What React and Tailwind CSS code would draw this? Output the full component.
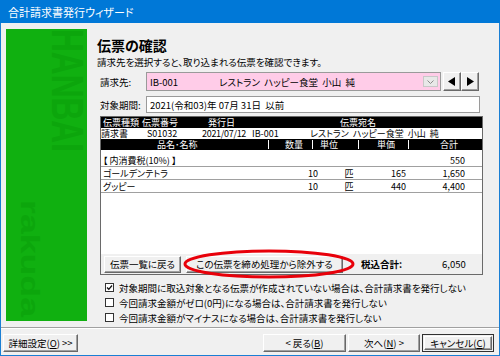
const FONT = "font-[family-name:'Noto_Sans_CJK_JP','Noto_Sans',sans-serif] [font-feature-settings:'palt']"

const Btn3D = ({ className = "", children }) => (
  <div
    className={`flex items-center justify-center whitespace-nowrap bg-[#f0f0f0] border border-t-white border-l-white border-r-[#696969] border-b-[#696969] shadow-[inset_-1px_-1px_0_#a0a0a0] ${className}`}
  >
    {children}
  </div>
)

const Checkbox = ({ checked, label }) => (
  <div className="flex items-center h-[15px] pl-[8px] gap-[5px] whitespace-nowrap">
    <div className="w-[9px] h-[9px] border border-[#333] bg-white flex items-center justify-center">
      {checked && (
        <svg width="7" height="7" viewBox="0 0 7 7">
          <polyline points="1,3.5 2.8,5.3 6,1.5" fill="none" stroke="#111" strokeWidth="1.3" />
        </svg>
      )}
    </div>
    <span>{label}</span>
  </div>
)

const Sep = () => <div className="w-px h-[9px] bg-white self-center" />

// faint product logo on the green side panel
const SideLogo = () => (
  <svg width="81" height="292" viewBox="0 0 81 292" className="block">
    <rect width="81" height="292" fill="#10b010" />
    <g fill="#0ca60c" fontFamily="Liberation Sans, sans-serif" fontWeight="700">
      <text transform="translate(46 0) rotate(90)" fontSize="44" textLength="123" lengthAdjust="spacingAndGlyphs">
        HANBAI
      </text>
      <text transform="translate(15 171) rotate(90)" fontSize="26" textLength="117" lengthAdjust="spacingAndGlyphs">
        rakuda
      </text>
    </g>
  </svg>
)

export default function App() {
  const rows = [
    { name: "ゴールデンテトラ", qty: "10", unit: "匹", price: "165", total: "1,650" },
    { name: "グッピー", qty: "10", unit: "匹", price: "440", total: "4,400" }
  ]

  return (
    <div className={`w-[500px] h-[356px] flex flex-col text-[9.5px] leading-[12px] text-black ${FONT}`}>
      {/* Title bar */}
      <div className="h-[23px] bg-[#0078d7] text-white text-[11px] pl-[8px] flex items-center">合計請求書発行ウィザード</div>

      <div className="flex-1 flex flex-col bg-[#f0f0f0] border-x border-b border-[#1a7fd4]">
        {/* Main area */}
        <div className="h-[304px] flex pt-[6px] pl-[5px]">
          <SideLogo />

          {/* Content */}
          <div className="ml-[10px] w-[387px] flex flex-col">
            <div className="mt-[7px] text-[14px] leading-[18px] font-bold">伝票の確認</div>
            <div className="mt-[2px] leading-[12px] whitespace-nowrap">請求先を選択すると、取り込まれる伝票を確認できます。</div>

            {/* 請求先 */}
            <div className="mt-[4px] flex items-center h-[19px] whitespace-nowrap">
              <div className="w-[49px] pl-[3px]">請求先:</div>
              <div className="w-[295px] h-[19px] bg-[#ffcce8] border border-[#9a9a9a] flex items-center pl-[3px] pr-[2px]">
                <span className="w-[69px]">IB-001</span>
                <span className="flex-1">レストラン&nbsp;&nbsp;ハッピー食堂&nbsp;&nbsp;小山&nbsp;&nbsp;純</span>
                <div className="w-[15px] h-[11px] bg-[#e8e8e8] border border-[#c8c8c8] flex items-center justify-center">
                  <svg width="7" height="4" viewBox="0 0 7 4">
                    <polyline points="0.5,0.5 3.5,3.5 6.5,0.5" fill="none" stroke="#8a8a8a" strokeWidth="1" />
                  </svg>
                </div>
              </div>
              <Btn3D className="ml-[2px] w-[18px] h-[19px]">
                <svg width="8" height="9" viewBox="0 0 8 9">
                  <polygon points="7,0 7,9 0,4.5" fill="#000" />
                </svg>
              </Btn3D>
              <Btn3D className="w-[18px] h-[19px]">
                <svg width="8" height="9" viewBox="0 0 8 9">
                  <polygon points="1,0 1,9 8,4.5" fill="#000" />
                </svg>
              </Btn3D>
            </div>

            {/* 対象期間 */}
            <div className="mt-[5px] flex items-center h-[17px] whitespace-nowrap">
              <div className="w-[49px] pl-[3px]">対象期間:</div>
              <div className="w-[334px] h-[17px] bg-white border border-[#9a9a9a] flex items-center pl-[3px]">
                2021(令和03)年 07月 31日&nbsp;&nbsp;以前
              </div>
            </div>

            {/* Table */}
            <div className="mt-[3px] ml-[3px] w-[383px] h-[159px] border border-[#6a6a6a] bg-white flex flex-col whitespace-nowrap text-[9px] leading-[11px]">
              <div className="h-[11px] bg-black text-white flex items-center">
                <div className="w-[40px] pl-[2px]">伝票種類</div>
                <div className="w-[58px] pl-[1px]">伝票番号</div>
                <div className="w-[50px] pl-[9px]">発行日</div>
                <div className="w-[34px]" />
                <div className="flex-1 pl-[57px]">伝票宛名</div>
              </div>
              <div className="h-[11px] flex items-center">
                <div className="w-[40px]">請求書</div>
                <div className="w-[58px] pl-[6px]">S01032</div>
                <div className="w-[50px] pl-[3px] tracking-[-0.3px]">2021/07/12</div>
                <div className="w-[34px] pl-[3px]">IB-001</div>
                <div className="flex-1 pl-[27px]">レストラン&nbsp;&nbsp;ハッピー食堂&nbsp;&nbsp;小山&nbsp;&nbsp;純</div>
              </div>
              <div className="h-[11px] bg-black text-white flex">
                <div className="w-[167px] pl-[56px]">品名･名称</div>
                <Sep />
                <div className="w-[43px] pl-[16px]">数量</div>
                <Sep />
                <div className="w-[45px] pl-[7px]">単位</div>
                <Sep />
                <div className="w-[49px] pl-[18px]">単価</div>
                <Sep />
                <div className="flex-1 pl-[31px]">合計</div>
              </div>

              <div className="h-[17px] pt-[4px] flex items-center border-b border-[#a0a0a0]">
                <div className="w-[304px] pl-[2px]">【 内消費税(10%) 】</div>
                <div className="w-[60px] text-right">550</div>
              </div>
              {rows.map((r) => (
                <div key={r.name} className="h-[13px] flex items-center border-b border-[#a0a0a0]">
                  <div className="w-[167px] pl-[2px]">{r.name}</div>
                  <div className="w-[50px] text-right">{r.qty}</div>
                  <div className="w-[62px] text-center">{r.unit}</div>
                  <div className="w-[26px] text-right">{r.price}</div>
                  <div className="w-[59px] text-right">{r.total}</div>
                </div>
              ))}

              <div className="flex-1" />

              {/* Bottom bar */}
              <div className="relative h-[20px] bg-[#f0f0f0] flex items-center pl-[3px] text-[9.5px]">
                <Btn3D className="w-[77px] h-[17px]">伝票一覧に戻る</Btn3D>
                <Btn3D className="ml-[5px] w-[157px] h-[17px]">この伝票を締め処理から除外する</Btn3D>
                <div className="ml-[18px] font-bold">税込合計:</div>
                <div className="ml-[40px] w-[22px] text-right">6,050</div>
                <svg className="absolute left-[82px] top-[-5px]" width="172" height="30" viewBox="0 0 172 30">
                  <ellipse cx="86" cy="15" rx="84" ry="13" fill="none" stroke="#e8000a" strokeWidth="3" />
                </svg>
              </div>
            </div>

            {/* Options */}
            <div className="mt-[5px] flex flex-col">
              <Checkbox checked label="対象期間に取込対象となる伝票が作成されていない場合は、合計請求書を発行しない" />
              <Checkbox label="今回請求金額がゼロ(0円)になる場合は、合計請求書を発行しない" />
              <Checkbox label="今回請求金額がマイナスになる場合は、合計請求書を発行しない" />
            </div>
          </div>
        </div>

        {/* Separator */}
        <div className="h-[2px] border-t border-[#a0a0a0] border-b border-b-white" />

        {/* Buttons */}
        <div className="flex-1 flex items-start pt-[5px] pl-[2px]">
          <Btn3D className="w-[75px] h-[18px]">
            詳細設定(<u>O</u>) &gt;&gt;
          </Btn3D>
          <div className="flex-1" />
          <Btn3D className="w-[83px] h-[18px]">
            &lt; 戻る(<u>B</u>)
          </Btn3D>
          <Btn3D className="ml-[2px] w-[72px] h-[18px]">
            次へ(<u>N</u>) &gt;
          </Btn3D>
          <div className="ml-[2px] mr-[5px] w-[72px] h-[18px] border border-[#303030] p-px">
            <Btn3D className="w-full h-full">
              キャンセル(<u>C</u>)
            </Btn3D>
          </div>
        </div>
      </div>
    </div>
  )
}
